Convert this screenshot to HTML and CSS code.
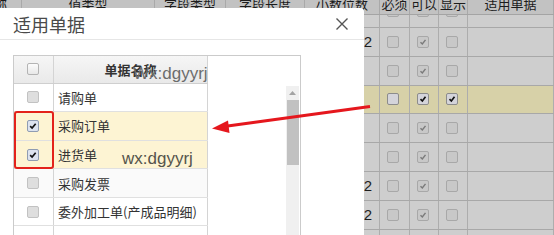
FILE: index.html
```html
<!DOCTYPE html>
<html lang="zh-CN">
<head>
<meta charset="utf-8">
<title>适用单据</title>
<link rel="stylesheet" href="styles.css">
</head>
<body>
<div class="page">
  <div class="bg">
    <div class="bg-head">
      <div class="hc hc-first">名称</div>
      <div class="hc">值类型</div>
      <div class="hc">字段类型</div>
      <div class="hc">字段长度</div>
      <div class="hc">小数位数</div>
      <div class="hc">必须</div>
      <div class="hc">可以</div>
      <div class="hc">显示</div>
      <div class="hc">适用单据</div>
    </div>
    <div class="bg-body">
      <div class="bg-row first"><div class="c"></div><div class="c"></div><div class="c"></div><div class="c"></div><div class="c num">2</div><div class="c"><span class="cb"></span></div><div class="c"><span class="cb"><svg viewBox="0 0 12 12"><path class="ck-g" d="M3 6.2 5.2 8.4 9 3.4"/></svg></span></div><div class="c"><span class="cb"></span></div><div class="c"></div></div>
      <div class="bg-row"><div class="c"></div><div class="c"></div><div class="c"></div><div class="c"></div><div class="c num">2</div><div class="c"><span class="cb"></span></div><div class="c"><span class="cb"><svg viewBox="0 0 12 12"><path class="ck-g" d="M3 6.2 5.2 8.4 9 3.4"/></svg></span></div><div class="c"><span class="cb"></span></div><div class="c"></div></div>
      <div class="bg-row"><div class="c"></div><div class="c"></div><div class="c"></div><div class="c"></div><div class="c num"></div><div class="c"><span class="cb"></span></div><div class="c"><span class="cb"><svg viewBox="0 0 12 12"><path class="ck-g" d="M3 6.2 5.2 8.4 9 3.4"/></svg></span></div><div class="c"><span class="cb"></span></div><div class="c"></div></div>
      <div class="bg-row hl"><div class="c"></div><div class="c"></div><div class="c"></div><div class="c"></div><div class="c num"></div><div class="c"><span class="cb cb-hl"></span></div><div class="c"><span class="cb cb-hl"><svg viewBox="0 0 12 12"><path class="ck-b" d="M3 6.2 5.2 8.4 9 3.4"/></svg></span></div><div class="c"><span class="cb cb-hl"><svg viewBox="0 0 12 12"><path class="ck-b" d="M3 6.2 5.2 8.4 9 3.4"/></svg></span></div><div class="c"></div></div>
      <div class="bg-row"><div class="c"></div><div class="c"></div><div class="c"></div><div class="c"></div><div class="c num"></div><div class="c"><span class="cb"></span></div><div class="c"><span class="cb"><svg viewBox="0 0 12 12"><path class="ck-g" d="M3 6.2 5.2 8.4 9 3.4"/></svg></span></div><div class="c"><span class="cb"></span></div><div class="c"></div></div>
      <div class="bg-row"><div class="c"></div><div class="c"></div><div class="c"></div><div class="c"></div><div class="c num"></div><div class="c"><span class="cb"></span></div><div class="c"><span class="cb"><svg viewBox="0 0 12 12"><path class="ck-g" d="M3 6.2 5.2 8.4 9 3.4"/></svg></span></div><div class="c"><span class="cb"></span></div><div class="c"></div></div>
      <div class="bg-row"><div class="c"></div><div class="c"></div><div class="c"></div><div class="c"></div><div class="c num">2</div><div class="c"><span class="cb"></span></div><div class="c"><span class="cb"><svg viewBox="0 0 12 12"><path class="ck-g" d="M3 6.2 5.2 8.4 9 3.4"/></svg></span></div><div class="c"><span class="cb"></span></div><div class="c"></div></div>
      <div class="bg-row"><div class="c"></div><div class="c"></div><div class="c"></div><div class="c"></div><div class="c num">2</div><div class="c"><span class="cb"></span></div><div class="c"><span class="cb"><svg viewBox="0 0 12 12"><path class="ck-g" d="M3 6.2 5.2 8.4 9 3.4"/></svg></span></div><div class="c"><span class="cb"></span></div><div class="c"></div></div>
      <div class="bg-row"><div class="c"></div><div class="c"></div><div class="c"></div><div class="c"></div><div class="c num"></div><div class="c"><span class="cb"></span></div><div class="c"><span class="cb"><svg viewBox="0 0 12 12"><path class="ck-g" d="M3 6.2 5.2 8.4 9 3.4"/></svg></span></div><div class="c"><span class="cb"></span></div><div class="c"></div></div>
    </div>
  </div>

  <div class="dialog">
    <div class="dlg-title">
      <span class="dlg-title-text">适用单据</span>
      <svg class="dlg-close" viewBox="0 0 12 12"><path d="M0.5 0.5 11.5 11.5 M11.5 0.5 0.5 11.5"/></svg>
    </div>
    <div class="dlg-body">
      <div class="grid-box">
        <div class="grid">
          <div class="g-head">
            <div class="g-cb"><span class="dcb"></span></div>
            <div class="g-name g-name-head">单据名称</div>
          </div>
          <div class="g-row">
            <div class="g-cb"><span class="dcb dis"></span></div>
            <div class="g-name">请购单</div>
          </div>
          <div class="g-row sel">
            <div class="g-cb"><span class="dcb on"><svg viewBox="0 0 12 12"><path class="ck-b" d="M2.6 6.2 4.9 8.5 9.2 3.2"/></svg></span></div>
            <div class="g-name">采购订单</div>
          </div>
          <div class="g-row sel">
            <div class="g-cb"><span class="dcb on"><svg viewBox="0 0 12 12"><path class="ck-b" d="M2.6 6.2 4.9 8.5 9.2 3.2"/></svg></span></div>
            <div class="g-name">进货单</div>
          </div>
          <div class="g-row alt">
            <div class="g-cb"><span class="dcb dis"></span></div>
            <div class="g-name">采购发票</div>
          </div>
          <div class="g-row">
            <div class="g-cb"><span class="dcb dis"></span></div>
            <div class="g-name">委外加工单(产成品明细)</div>
          </div>
          <div class="g-row">
            <div class="g-cb"></div>
            <div class="g-name"></div>
          </div>
        </div>
        <div class="grid-rest">
          <div class="scrollbar">
            <div class="sb-up"><svg viewBox="0 0 7 4"><path d="M0 4 3.5 0 7 4Z"/></svg></div>
            <div class="sb-thumb"></div>
          </div>
        </div>
      </div>
    </div>
  </div>

  <div class="mark mark1">Wx:dgyyrj</div>
  <div class="mark mark2">wx:dgyyrj</div>
  <div class="redbox"></div>
  <svg class="arrow" viewBox="0 0 554 235">
    <path class="arrow-line" d="M370 106.5 224 126.5"/>
    <path class="arrow-head" d="M212 128.5 228 120.5 229.5 133Z"/>
  </svg>
</div>
</body>
</html>
```

FILE: styles.css
```css
* {
  box-sizing: border-box;
  margin: 0;
  padding: 0;
}

html, body {
  width: 554px;
  height: 235px;
  overflow: hidden;
}

body {
  margin: 0;
  background: #cdcdcd;
  font-family: "Noto Sans CJK SC", "Noto Sans", sans-serif;
}

.page {
  position: relative;
  width: 554px;
  height: 235px;
  overflow: hidden;
  --cols: 22px 133px 71px 79px 75px 30px 29px 29px 86px;
}

/* background (dimmed) table */
.bg-head {
  position: relative;
  z-index: 1;
  display: grid;
  grid-template-columns: var(--cols);
  height: 15px;
  background: #c2c2c2;
  border-bottom: 1px solid #a4a4a4;
}

.hc {
  display: flex;
  align-items: flex-end;
  justify-content: center;
  overflow: hidden;
  white-space: nowrap;
  padding-bottom: 4px;
  border-right: 1px solid #a9a9a9;
  font-size: 13px;
  line-height: 13px;
  color: #1c1c1c;
}

.hc-first {
  justify-content: flex-end;
  padding-right: 14px;
}

.bg-body {
  margin-top: -15.8px;
}

.bg-row {
  display: grid;
  grid-template-columns: var(--cols);
  height: 28.8px;
  border-bottom: 1px solid #a8a8a8;
  background: #cecece;
}

.bg-row.first .c {
  padding-bottom: 8px;
}

.bg-row.first .c.num {
  padding-bottom: 14px;
}

.bg-row.hl {
  background: #d7d1a8;
}

.c {
  display: flex;
  align-items: center;
  justify-content: center;
  border-right: 1px solid #adadad;
}

.c.num {
  justify-content: flex-end;
  padding-right: 7px;
  font-family: "Liberation Sans", sans-serif;
  font-size: 15px;
  color: #1e1e1e;
}

.cb {
  display: flex;
  align-items: center;
  justify-content: center;
  width: 12px;
  height: 12px;
  margin-left: -3px;
  border: 1px solid #a8a8a8;
  border-radius: 2px;
  background: #c8c8c8;
}

.cb.cb-hl {
  background: #d4d4da;
  border-color: #8c8c8c;
}

.cb svg, .dcb svg {
  width: 10px;
  height: 10px;
}

.ck-g {
  fill: none;
  stroke: #7a7a7a;
  stroke-width: 1.7;
}

.ck-b {
  fill: none;
  stroke: #111;
  stroke-width: 2;
}

/* dialog */
.dialog {
  position: absolute;
  left: -4px;
  top: 8px;
  width: 368px;
  height: 240px;
  background: #fff;
  border-radius: 4px;
  z-index: 2;
}

.dlg-title {
  display: flex;
  align-items: center;
  justify-content: space-between;
  height: 32px;
  padding-left: 17px;
  padding-right: 16px;
  border-bottom: 1px solid #e6e6e6;
}

.dlg-title-text {
  font-size: 18px;
  line-height: 20px;
  color: #4a4a4a;
}

.dlg-close {
  width: 12px;
  height: 12px;
}

.dlg-close path {
  stroke: #555;
  stroke-width: 1.4;
  fill: none;
}

.dlg-body {
  padding: 15px 0 0 17px;
}

.grid-box {
  display: flex;
  width: 288px;
  height: 200px;
  border: 1px solid #cbcbcb;
  border-bottom: none;
}

.grid {
  display: flex;
  flex-direction: column;
  width: 194px;
}

.g-head, .g-row {
  display: grid;
  grid-template-columns: 40px 154px;
}

.g-head {
  height: 28px;
  background: linear-gradient(#f6f6f6, #e9e9e9);
  border-bottom: 1px solid #cfcfcf;
}

.g-row {
  height: 28.9px;
  border-bottom: 1px solid #e0e0e0;
  background: #fff;
}

.g-row.sel {
  background: #fdf4d3;
}

.g-row.alt {
  background: #fafafa;
}

.g-cb {
  display: flex;
  align-items: center;
  justify-content: center;
  border-right: 1px solid #d4d4d4;
  padding-right: 1px;
}

.g-name {
  display: flex;
  align-items: center;
  padding-left: 4px;
  border-right: 1px solid #d4d4d4;
  font-size: 13px;
  color: #333;
  white-space: nowrap;
}

.g-name-head {
  justify-content: center;
  padding-left: 0;
  font-weight: bold;
  color: #333;
}

.dcb {
  display: flex;
  align-items: center;
  justify-content: center;
  width: 12px;
  height: 12px;
  border: 1px solid #b4b4b4;
  border-radius: 2px;
  background: linear-gradient(#fcfcfc, #e8e8e8);
}

.dcb.dis {
  background: #dedede;
  border-color: #c2c2c2;
}

.dcb.on {
  background: #dde3ee;
  border-color: #8f9cb2;
}

.grid-rest {
  flex: 1;
  display: flex;
  justify-content: flex-end;
  padding-top: 30px;
}

.scrollbar {
  display: flex;
  flex-direction: column;
  align-items: center;
  width: 13px;
  margin-right: 1px;
  background: #f0f0f0;
}

.sb-up {
  display: flex;
  align-items: center;
  justify-content: center;
  height: 14px;
  width: 13px;
}

.sb-up svg {
  width: 7px;
  height: 4px;
}

.sb-up path {
  fill: #a3a3a3;
}

.sb-thumb {
  width: 12px;
  height: 65px;
  background: #c1c1c1;
}

/* annotations */
.mark {
  position: absolute;
  z-index: 3;
  font-family: "Liberation Sans", sans-serif;
  font-size: 17px;
  line-height: 17px;
  white-space: nowrap;
}

.mark1 {
  left: 133px;
  top: 65px;
  color: #6c6c6c;
}

.mark2 {
  left: 122px;
  top: 150px;
  color: #55554c;
}

.redbox {
  position: absolute;
  z-index: 3;
  left: 14px;
  top: 111px;
  width: 40px;
  height: 58px;
  border: 2px solid #e3221b;
  border-radius: 3px;
}

.arrow {
  position: absolute;
  z-index: 4;
  left: 0;
  top: 0;
  width: 554px;
  height: 235px;
  pointer-events: none;
}

.arrow-line {
  stroke: #e5171d;
  stroke-width: 3;
  fill: none;
}

.arrow-head {
  fill: #e5171d;
}
```
